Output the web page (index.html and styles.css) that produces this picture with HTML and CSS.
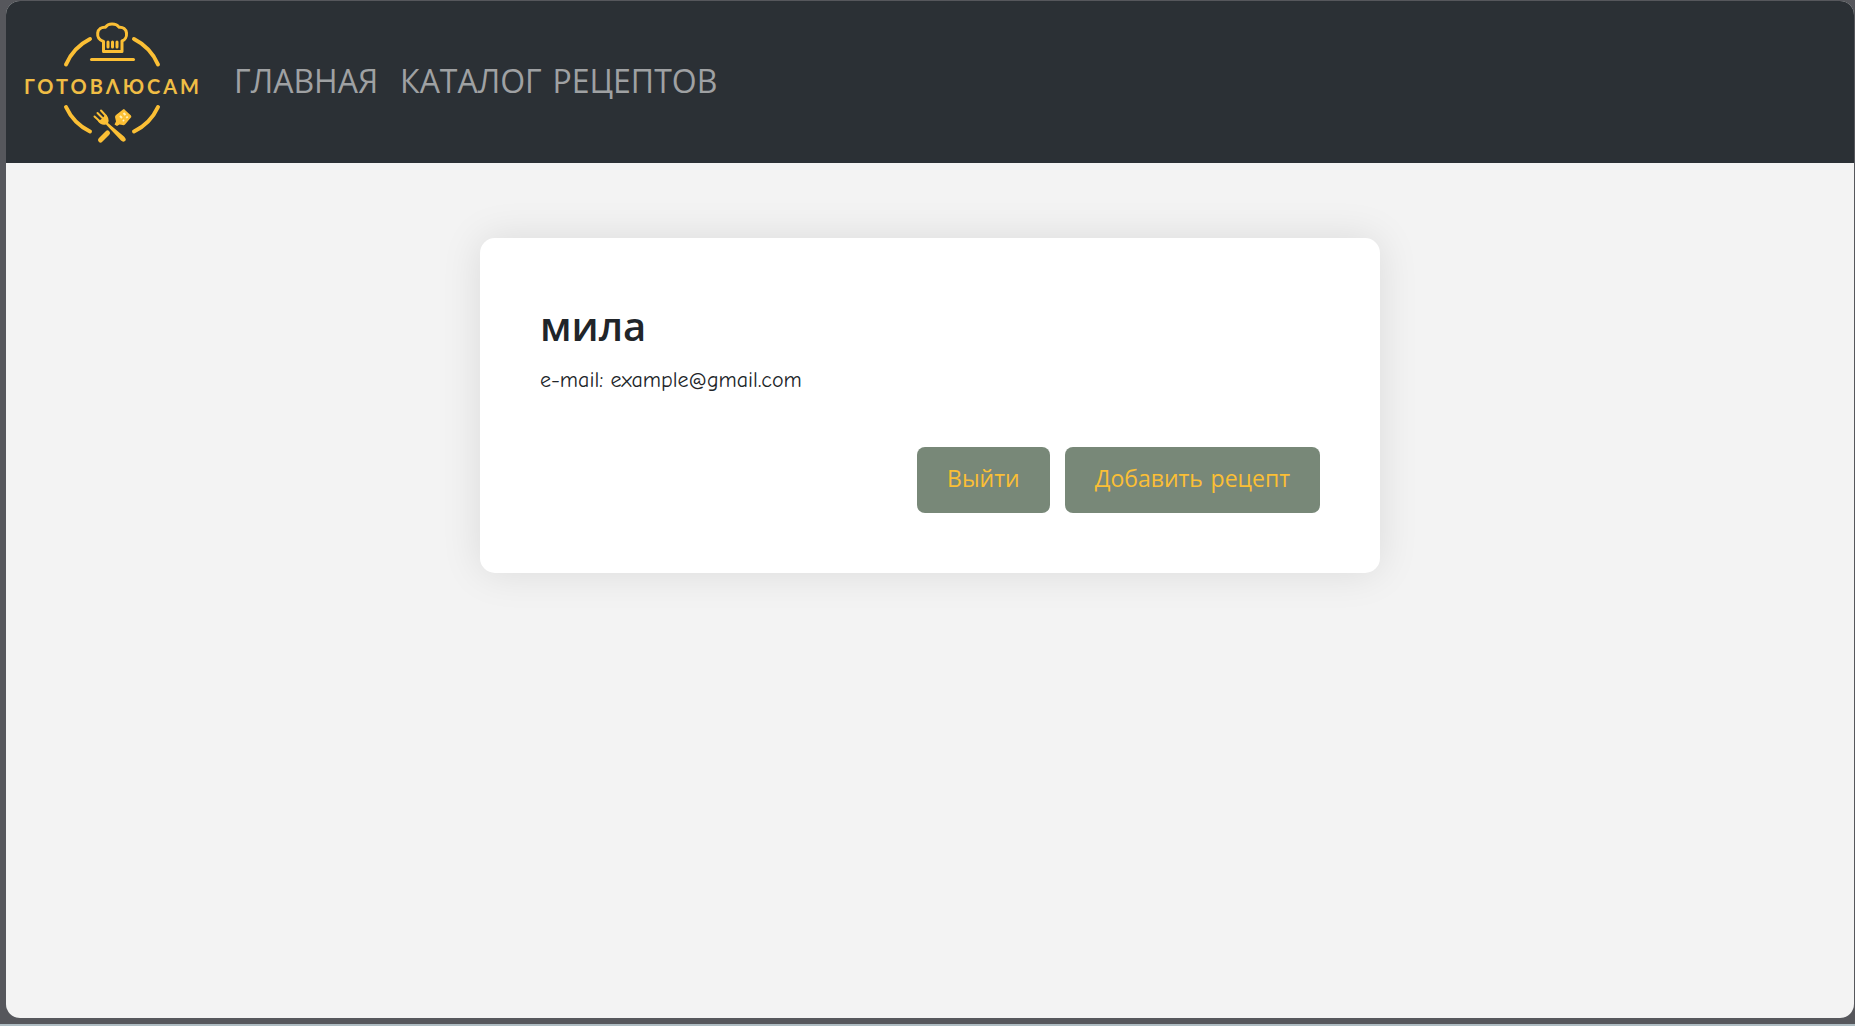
FILE: index.html
```html
<!DOCTYPE html>
<html lang="ru">
<head>
  <meta charset="utf-8">
  <meta name="viewport" content="width=device-width, initial-scale=1">
  <title>ГотовлюСам</title>
  <link rel="stylesheet" href="styles.css">
</head>
<body>
  <div class="window">
    <header class="navbar">
      <a class="brand" href="#">
        <svg class="logo" viewBox="0 0 176 122" role="img" aria-label="ГотовлюСам">
          <!-- ring -->
          <g class="logo-line logo-ring">
            <path d="M42 42.500A51 51 0 0 1 66 17"/>
            <path d="M110 17A51 51 0 0 1 134 42.500"/>
            <path d="M42 85A51 51 0 0 0 66 109.500"/>
            <path d="M110 109.500A51 51 0 0 0 134 85"/>
          </g>
          <!-- chef's hat -->
          <g class="logo-line logo-hat">
            <path d="M79.500 29.500V19.500C75 18 73.300 14.500 73.700 11C74.200 7 77.500 4.800 81.500 5.200C83 2.800 85.300 2 88 2C90.700 2 93.500 2.800 95 5.200C99 4.800 102 7 102.500 11C102.900 14.500 101 18 98 19V29.500Z"/>
            <path d="M84 20V25M88.500 20V25M93 20V25"/>
            <path d="M67.500 37.500H109.500"/>
          </g>
          <text class="logo-text" x="89" y="72">ГОТОВΛЮСАМ</text>
          <!-- spatula -->
          <path class="logo-fill" d="M99 87.500Q100 86.500 101 88L107 93.500Q108 95 106.500 96L101 102.500Q100 103.500 98.500 103L95.500 102.500L93 104L90.500 102.500L92 99.500L91 95Q91 94 92 93Z"/>
          <path class="logo-dots" d="M96 94L98 96M99.500 91L101.500 93M99 98L100 99M102.500 94.500L103.500 96"/>
          <path class="logo-line logo-handle" d="M76.500 118L83.500 111"/>
          <!-- fork -->
          <path class="logo-line logo-tines" d="M70.500 94.500L76.500 100M73.500 91L79.500 97M77 88.500L82 94"/>
          <path class="logo-fill" d="M73.500 98.500Q77 99 81.500 92.500Q86 96 84 101L100 114.500Q103 117.500 101 119Q99 120.500 97 118.500L82 102.500Q77 104 73.500 98.500Z"/>
        </svg>
      </a>
      <nav class="menu">
        <a class="menu-link" href="#">ГЛАВНАЯ</a>
        <a class="menu-link" href="#">КАТАЛОГ РЕЦЕПТОВ</a>
      </nav>
    </header>
    <main class="content">
      <section class="card">
        <h1 class="user-name">мила</h1>
        <p class="user-email">e-mail: example@gmail.com</p>
        <div class="actions">
          <button class="btn" type="button">Выйти</button>
          <button class="btn" type="button">Добавить рецепт</button>
        </div>
      </section>
    </main>
  </div>
</body>
</html>
```
FILE: styles.css
```css
* {
  box-sizing: border-box;
}

body {
  margin: 0;
  min-height: 100vh;
  display: flex;
  padding: 1px 1px 6px 6px;
  border-bottom: 2px solid #afbdc3;
  background: #56575c;
  color: #212529;
  font-family: "Comic Sans MS", "Comic Neue", "Open Sans", sans-serif;
}

.window {
  flex: 1;
  display: flex;
  flex-direction: column;
  overflow: hidden;
  border-radius: 14px;
  background: #f3f3f3;
}

.navbar {
  display: flex;
  align-items: center;
  gap: 34px;
  padding: 21px 18px 19px;
  background: #2b3035;
}

.brand {
  display: flex;
}

.logo {
  width: 176px;
  height: 122px;
  overflow: visible;
}

.logo-line {
  fill: none;
  stroke: #fbbf35;
  stroke-linecap: round;
  stroke-linejoin: round;
}

.logo-ring {
  stroke-width: 4;
}

.logo-hat {
  stroke-width: 3;
}

.logo-handle {
  stroke-width: 5;
}

.logo-tines {
  stroke-width: 2;
}

.logo-fill {
  fill: #fbbf35;
}

.logo-dots {
  stroke: #fff0b8;
  stroke-width: 2;
}

.logo-text {
  fill: #f0bd45;
  font-family: Lato, "Open Sans", sans-serif;
  font-size: 20px;
  font-weight: 700;
  letter-spacing: 3px;
  text-anchor: middle;
}

.menu {
  display: flex;
  gap: 22px;
}

.menu-link {
  color: #9fa1a3;
  font-size: 32px;
  line-height: 48px;
  text-decoration: none;
}

.content {
  padding: 75px 24px;
}

.card {
  max-width: 900px;
  margin: 0 auto;
  padding: 60px;
  border-radius: 15px;
  background: #fff;
  box-shadow: 0 0 40px rgba(0, 0, 0, 0.1);
}

.user-name {
  margin: 0 0 8px;
  font-size: 40px;
  font-weight: 600;
  line-height: 60px;
}

.user-email {
  margin: 0 0 53px;
  font-size: 22px;
  line-height: 28px;
}

.actions {
  display: flex;
  flex-wrap: wrap;
  justify-content: flex-end;
  gap: 15px;
}

.btn {
  padding: 15px 30px;
  border: 0;
  border-radius: 8px;
  background: #788878;
  color: #fbbf35;
  font: inherit;
  font-size: 23px;
  line-height: 36px;
}
```
